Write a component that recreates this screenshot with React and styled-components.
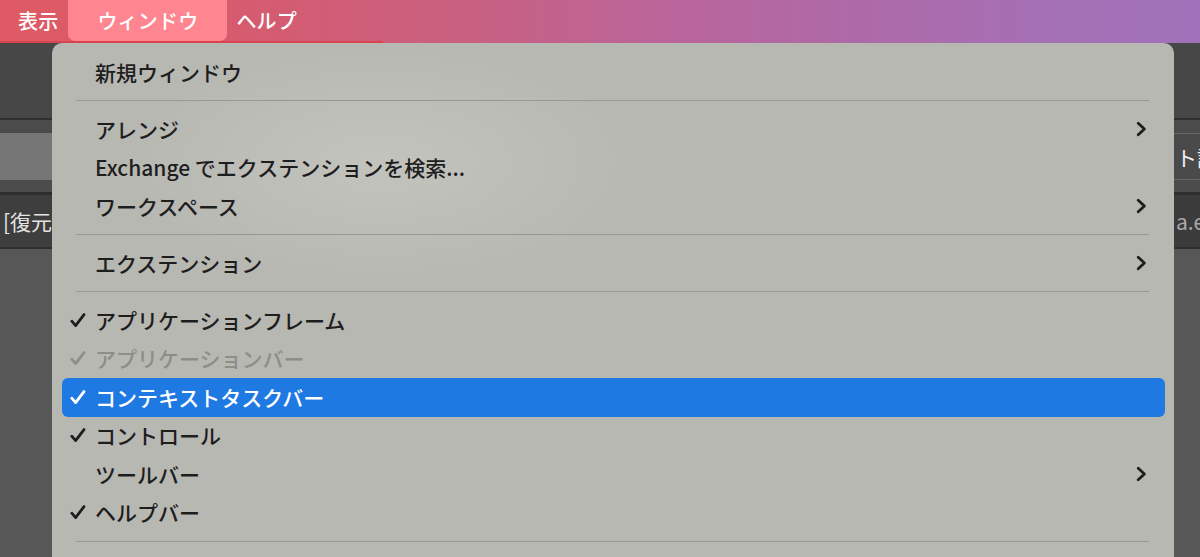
import React from 'react';
import styled, { createGlobalStyle } from 'styled-components';

const GlobalStyle = createGlobalStyle`
  html, body {
    margin: 0;
    padding: 0;
  }
  body {
    width: 1200px;
    height: 557px;
    overflow: hidden;
    background: #575757;
    font-family: "Noto Sans CJK JP", "Noto Sans", sans-serif;
  }
`;

const topMenus = [
  { label: '表示' },
  { label: 'ウィンドウ', open: true },
  { label: 'ヘルプ' },
];

// sep: true の行は区切り線
const menuItems = [
  { label: '新規ウィンドウ' },
  { sep: true },
  { label: 'アレンジ', sub: true },
  { label: 'Exchange でエクステンションを検索...' },
  { label: 'ワークスペース', sub: true },
  { sep: true },
  { label: 'エクステンション', sub: true },
  { sep: true },
  { label: 'アプリケーションフレーム', checked: true },
  { label: 'アプリケーションバー', checked: true, disabled: true },
  { label: 'コンテキストタスクバー', checked: true, active: true },
  { label: 'コントロール', checked: true },
  { label: 'ツールバー', sub: true },
  { label: 'ヘルプバー', checked: true },
  { sep: true },
];

const Check = ({ color }) => (
  <svg width="16" height="15" viewBox="0 0 16 15">
    <path d="M1.8 8.2 L5.6 12.6 L14 1.6" fill="none" stroke={color} strokeWidth="2.8" strokeLinecap="round" strokeLinejoin="round" />
  </svg>
);

const Chevron = ({ color }) => (
  <svg width="11" height="16" viewBox="0 0 11 16">
    <path d="M2.2 2.2 L8.4 8 L2.2 13.8" fill="none" stroke={color} strokeWidth="2.8" strokeLinecap="round" strokeLinejoin="round" />
  </svg>
);

const App = () => {
  return (
    <>
      <GlobalStyle />
      <Screen>
        <MenuBar>
          {topMenus.map((m) => (
            <MenuTitle key={m.label} $open={m.open}>{m.label}</MenuTitle>
          ))}
        </MenuBar>

        <Workspace>
          <Band $h={75} $bg="#474747" />
          <Band $h={2} $bg="#2f2f2f" />
          <Band $h={13} $bg="#4b4b4b" />
          <SplitBand $h={47}>
            <LeftCell $bg="#767676" />
            <RightCell $bg="#4a4a4a" $lined>ト詳細</RightCell>
          </SplitBand>
          <Band $h={12} $bg="#4c4c4c" />
          <Band $h={3} $bg="#2d2d2d" />
          <SplitBand $h={52}>
            <LeftCell $bg="#3e3e3e">
              <TabText>[復元]</TabText>
            </LeftCell>
            <RightCell $bg="#3b3b3b" $dim>a.eps</RightCell>
          </SplitBand>
          <Band $h={2} $bg="#2f2f2f" />
          <Band $grow $bg="#575757" />
        </Workspace>

        <Dropdown>
          {menuItems.map((it, i) =>
            it.sep ? (
              <SepRow key={i}><SepLine /></SepRow>
            ) : (
              <Item key={i} $active={it.active} $disabled={it.disabled}>
                <CheckCol>
                  {it.checked && (
                    <Check color={it.active ? '#ffffff' : it.disabled ? '#8d8d89' : '#1e1e1e'} />
                  )}
                </CheckCol>
                <Label>{it.label}</Label>
                <SubCol>{it.sub && <Chevron color="#1e1e1e" />}</SubCol>
              </Item>
            )
          )}
        </Dropdown>
      </Screen>
    </>
  );
};

export default App;

const Screen = styled.div`
  position: relative;
  width: 1200px;
  height: 557px;
  overflow: hidden;
  display: flex;
  flex-direction: column;
`;

const MenuBar = styled.div`
  position: relative;
  flex-shrink: 0;
  height: 43px;
  display: flex;
  align-items: flex-start;
  gap: 10px;
  padding-left: 18px;
  background: linear-gradient(90deg, #df5a64 0%, #d65b6f 20%, #c9607f 38%, #bb659a 55%, #ad6aa8 72%, #a470b5 88%, #a072b9 100%);

  &::after {
    content: '';
    position: absolute;
    left: 0;
    bottom: 0;
    width: 383px;
    height: 2px;
    background: #d8434f;
  }
`;

const MenuTitle = styled.div`
  height: 41px;
  display: flex;
  align-items: center;
  padding: ${(p) => (p.$open ? '0 29px' : '0')};
  margin-right: ${(p) => (p.$open ? '-1px' : '0')};
  border-radius: 0 0 7px 7px;
  background: ${(p) => (p.$open ? '#ff8690' : 'transparent')};
  color: #ffffff;
  font-size: 20px;
  font-weight: 500;
  letter-spacing: 0.2px;
`;

const Workspace = styled.div`
  flex: 1;
  display: flex;
  flex-direction: column;
`;

const Band = styled.div`
  height: ${(p) => (p.$grow ? 'auto' : `${p.$h}px`)};
  flex: ${(p) => (p.$grow ? 1 : 'none')};
  background: ${(p) => p.$bg};
`;

const SplitBand = styled.div`
  height: ${(p) => p.$h}px;
  display: flex;
`;

const LeftCell = styled.div`
  flex: 1;
  display: flex;
  align-items: center;
  background: ${(p) => p.$bg};
`;

const RightCell = styled.div`
  width: 26px;
  box-sizing: border-box;
  overflow: hidden;
  white-space: nowrap;
  display: flex;
  align-items: center;
  padding-left: 2px;
  background: ${(p) => p.$bg};
  border-top: ${(p) => (p.$lined ? '1px solid #676767' : 'none')};
  border-bottom: ${(p) => (p.$lined ? '1px solid #676767' : 'none')};
  color: ${(p) => (p.$dim ? '#a9a9a9' : '#f2f2f2')};
  font-size: 21px;
`;

const TabText = styled.span`
  padding-left: 3px;
  color: #e4e4e4;
  font-size: 21px;
`;

const Dropdown = styled.div`
  position: absolute;
  left: 52px;
  top: 43px;
  width: 1122px;
  height: 540px;
  box-sizing: border-box;
  padding: 10px 9px 0 10px;
  border-radius: 10px 10px 0 0;
  background:
    radial-gradient(ellipse 260px 120px at 330px 120px, rgba(205, 205, 200, 0.55), rgba(205, 205, 200, 0) 100%),
    #b8b8b3;
  display: flex;
  flex-direction: column;
`;

const Item = styled.div`
  height: 38.5px;
  flex-shrink: 0;
  display: grid;
  grid-template-columns: 25px 1fr 20px;
  align-items: center;
  padding: 0 18px 0 8px;
  border-radius: 6px;
  background: ${(p) => (p.$active ? '#1f79e2' : 'transparent')};
  color: ${(p) => (p.$active ? '#ffffff' : p.$disabled ? '#8d8d89' : '#1e1e1e')};
`;

const CheckCol = styled.div`
  display: flex;
  align-items: center;
`;

const Label = styled.div`
  font-size: 21px;
  font-weight: 500;
  line-height: 1;
  white-space: nowrap;
`;

const SubCol = styled.div`
  display: flex;
  align-items: center;
  justify-content: flex-end;
`;

const SepRow = styled.div`
  height: 18.5px;
  flex-shrink: 0;
  display: flex;
  align-items: center;
  padding: 0 16px 0 14px;
`;

const SepLine = styled.div`
  flex: 1;
  height: 1px;
  background: #999994;
`;
